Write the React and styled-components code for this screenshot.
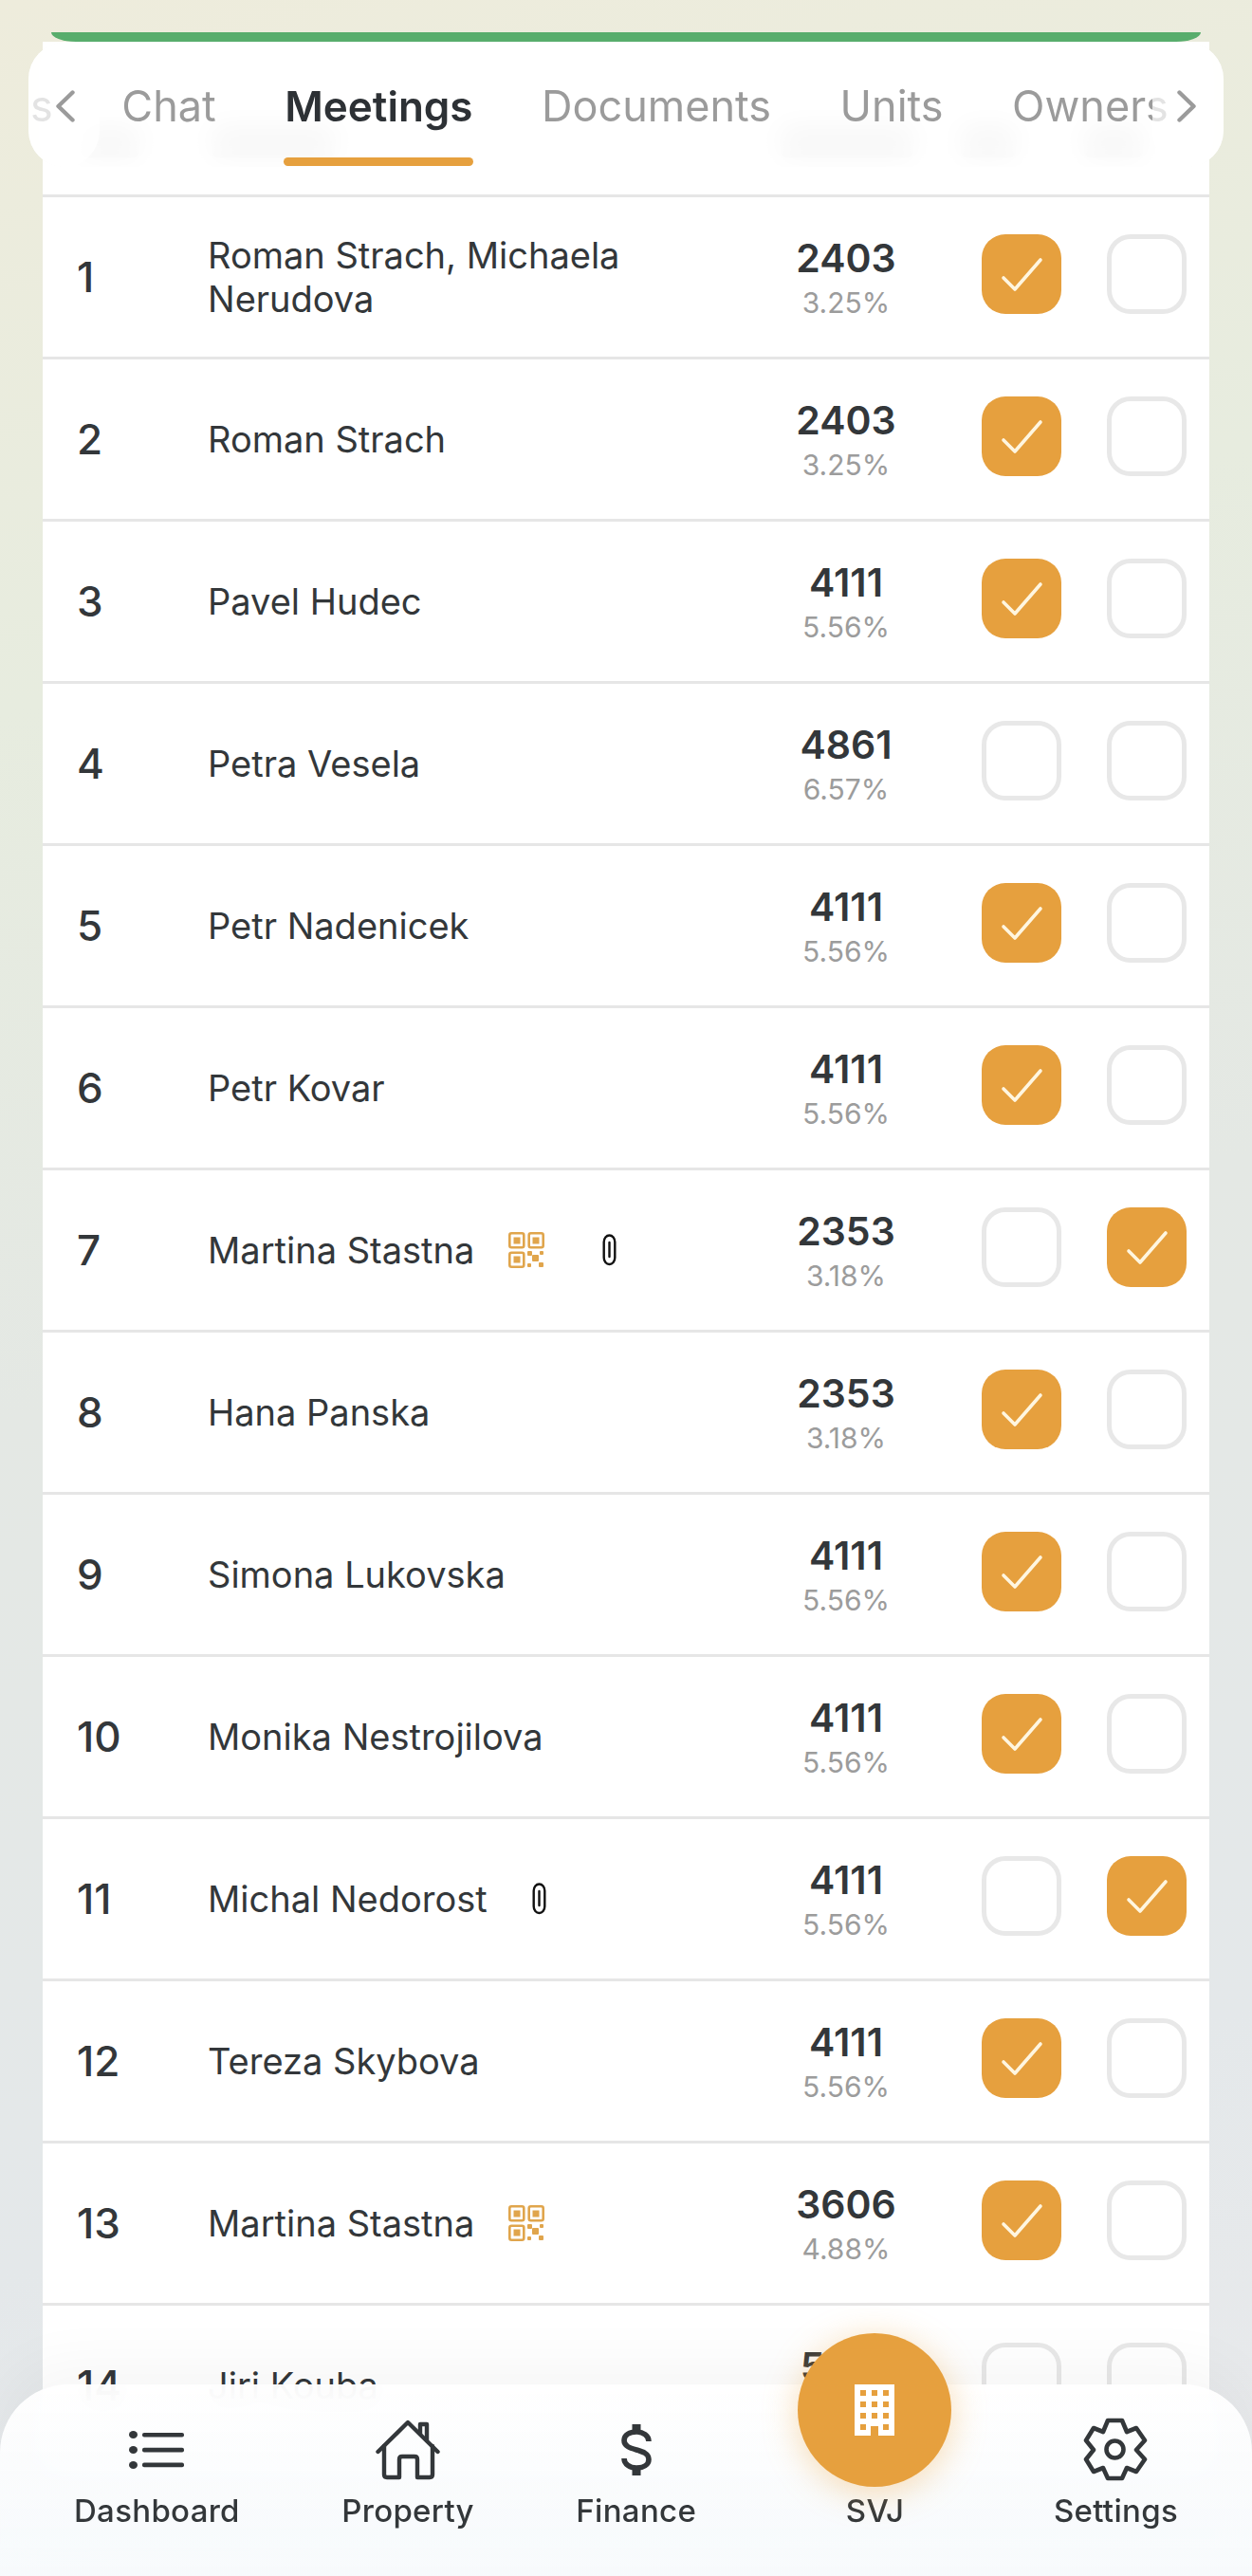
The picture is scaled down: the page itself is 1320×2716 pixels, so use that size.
import React from "react";
import styled, { createGlobalStyle } from "styled-components";

const GlobalStyle = createGlobalStyle`
  html, body {
    margin: 0;
    padding: 0;
  }
  body {
    font-family: Inter, "Noto Sans", "Liberation Sans", sans-serif;
    color: #33373a;
  }
`;

const Page = styled.div`
  position: relative;
  width: 1320px;
  height: 2716px;
  overflow: hidden;
  padding: 34px 45px 0;
  box-sizing: border-box;
  background: linear-gradient(168deg, #eeecdc 0%, #e7ecdf 25%, #e4e8e4 50%, #e4e8ea 80%, #e9eaec 100%);
`;

const GreenBar = styled.div`
  height: 10px;
  margin: 0 9px;
  background: #58ad6c;
  border-radius: 0 0 26px 26px / 0 0 10px 10px;
`;

const Card = styled.div`
  background: #fff;
`;

const HeadRow = styled.div`
  display: flex;
  align-items: flex-start;
  height: 161px;
  padding-top: 88px;
  box-sizing: border-box;
`;

const HeadBlock = styled.div`
  flex: none;
  width: ${(p) => p.$w}px;
  margin-left: ${(p) => p.$ml}px;
  height: 34px;
  background: #cfcfcf;
  border-radius: 6px;
`;

const Row = styled.div`
  display: flex;
  align-items: center;
  height: 171px;
  box-sizing: border-box;
  padding: 3px 24px 0 36px;
  background: linear-gradient(#e6e6e6 3px, transparent 3px);
`;

const Num = styled.div`
  flex: none;
  width: 138px;
  font-size: 44px;
  font-weight: 500;
`;

const NameCell = styled.div`
  flex: 1;
  min-width: 0;
  display: flex;
  align-items: center;
`;

const Name = styled.div`
  max-width: 470px;
  font-size: 38px;
  line-height: 46px;
`;

const Marks = styled.div`
  display: flex;
  align-items: center;
  gap: 49px;
  margin-left: 36px;
`;

const Mark = styled.div`
  display: flex;
  justify-content: center;
  width: 38px;
`;

const Share = styled.div`
  flex: none;
  width: 140px;
  margin-right: 73px;
  text-align: center;
  padding-top: 2px;
`;

const Units = styled.div`
  font-size: 41px;
  line-height: 46px;
  font-weight: 600;
`;

const Percent = styled.div`
  margin-top: 6px;
  font-size: 30px;
  line-height: 36px;
  color: #9c9c9c;
`;

const Box = styled.div`
  flex: none;
  width: 84px;
  height: 84px;
  box-sizing: border-box;
  margin-left: ${(p) => (p.$second ? 48 : 0)}px;
  margin-bottom: 6px;
  border-radius: 25px;
  background: ${(p) => (p.$on ? "#e6a03e" : "#fff")};
  border: ${(p) => (p.$on ? "none" : "5px solid #e8e8e8")};
`;

const CheckSvg = styled.svg`
  display: block;
`;

const TabBar = styled.div`
  position: absolute;
  left: 30px;
  top: 45px;
  width: 1260px;
  height: 131px;
  overflow: hidden;
  border-radius: 38px;
  background: rgba(255, 255, 255, 0.84);
  backdrop-filter: blur(14px);
`;

const TabTrack = styled.div`
  display: flex;
  gap: 72.5px;
  padding: 41px 0 0 2px;
  white-space: nowrap;
`;

const Tab = styled.div`
  position: relative;
  flex: none;
  font-size: ${(p) => (p.$active ? 44 : 45)}px;
  line-height: 52px;
  font-weight: ${(p) => (p.$active ? 600 : 400)};
  color: ${(p) => (p.$active ? "#2d3135" : "#9b9b9b")};
`;

const Underline = styled.div`
  position: absolute;
  left: -1px;
  right: 0;
  top: 80px;
  height: 9px;
  border-radius: 5px;
  background: #e6a03e;
`;

const ArrowZone = styled.div`
  position: absolute;
  top: 0;
  bottom: 0;
  ${(p) => (p.$right ? "right: 0;" : "left: 0;")}
  width: 75px;
  display: flex;
  align-items: center;
  padding-top: 3px;
  box-sizing: border-box;
  justify-content: ${(p) => (p.$right ? "flex-end" : "flex-start")};
  padding-left: ${(p) => (p.$right ? 0 : 29)}px;
  padding-right: ${(p) => (p.$right ? 29 : 0)}px;
  border-radius: 38px;
  background: rgba(255, 255, 255, 0.72);
`;

const Nav = styled.div`
  position: absolute;
  left: 0;
  right: 0;
  bottom: 0;
  height: 202px;
  padding: 26px 78px 0;
  box-sizing: border-box;
  display: flex;
  justify-content: space-between;
  border-radius: 72px 72px 0 0;
  background: linear-gradient(rgba(255, 255, 255, 0.93), rgba(247, 250, 252, 0.97));
  backdrop-filter: blur(16px);
  box-shadow: 0 -24px 60px rgba(0, 0, 0, 0.035);
`;

const NavItem = styled.div`
  display: flex;
  flex-direction: column;
  align-items: center;
  flex: none;
  width: ${(p) => (p.$wide ? "162px" : "auto")};
`;

const IconSlot = styled.div`
  height: 85px;
  display: flex;
  align-items: center;
  justify-content: center;
`;

const NavLabel = styled.div`
  font-size: 33px;
  line-height: 44px;
  font-weight: 500;
  letter-spacing: 0.3px;
  color: #33373a;
`;

const RoundButton = styled.div`
  position: absolute;
  left: 841px;
  top: 2460px;
  width: 162px;
  height: 162px;
  border-radius: 50%;
  display: flex;
  align-items: center;
  justify-content: center;
  background: #e6a03e;
  box-shadow: 0 6px 36px rgba(240, 170, 70, 0.4);
`;

const rows = [
  { n: 1, name: "Roman Strach, Michaela Nerudova", units: 2403, pct: "3.25%", yes: true },
  { n: 2, name: "Roman Strach", units: 2403, pct: "3.25%", yes: true },
  { n: 3, name: "Pavel Hudec", units: 4111, pct: "5.56%", yes: true },
  { n: 4, name: "Petra Vesela", units: 4861, pct: "6.57%" },
  { n: 5, name: "Petr Nadenicek", units: 4111, pct: "5.56%", yes: true },
  { n: 6, name: "Petr Kovar", units: 4111, pct: "5.56%", yes: true },
  { n: 7, name: "Martina Stastna", units: 2353, pct: "3.18%", no: true, qr: true, clip: true },
  { n: 8, name: "Hana Panska", units: 2353, pct: "3.18%", yes: true },
  { n: 9, name: "Simona Lukovska", units: 4111, pct: "5.56%", yes: true },
  { n: 10, name: "Monika Nestrojilova", units: 4111, pct: "5.56%", yes: true },
  { n: 11, name: "Michal Nedorost", units: 4111, pct: "5.56%", no: true, clip: true },
  { n: 12, name: "Tereza Skybova", units: 4111, pct: "5.56%", yes: true },
  { n: 13, name: "Martina Stastna", units: 3606, pct: "4.88%", yes: true, qr: true },
  { n: 14, name: "Jiri Kouba", units: 5106, pct: "6.90%" },
];

const Tick = () => (
  <CheckSvg width="84" height="84" viewBox="0 0 84 84" fill="none">
    <path d="M23 46 L35 58 L62 27" stroke="#fff6e0" strokeWidth="3.6" strokeLinecap="round" strokeLinejoin="round" />
  </CheckSvg>
);

const QrIcon = () => (
  <svg width="38" height="38" viewBox="0 0 38 38" fill="none">
    <g stroke="#e0a54c" strokeWidth="2.6">
      <rect x="1.3" y="1.3" width="15" height="15" rx="2" />
      <rect x="21.7" y="1.3" width="15" height="15" rx="2" />
      <rect x="1.3" y="21.7" width="15" height="15" rx="2" />
    </g>
    <g fill="#e0a54c">
      <rect x="5.5" y="5.5" width="7" height="7" />
      <rect x="25.5" y="5.5" width="7" height="7" />
      <rect x="5.5" y="25.5" width="7" height="7" />
      <rect x="20" y="20" width="5" height="5" rx="1" />
      <rect x="25" y="24" width="7" height="7" rx="1" />
      <rect x="33" y="20" width="4" height="4" rx="1" />
      <rect x="20" y="33" width="4" height="4" rx="1" />
      <rect x="32" y="32" width="5" height="5" rx="1" />
    </g>
  </svg>
);

const ClipIcon = () => (
  <svg width="15" height="34" viewBox="0 0 15 34" fill="none" stroke="#111" strokeWidth="2.4" strokeLinecap="round">
    <path d="M13.3 11 V25 A5.8 7 0 0 1 1.7 25 V8.5 A5.8 7 0 0 1 13.3 8.5 V11" />
    <path d="M7.5 9 V24" />
  </svg>
);

const Chevron = ({ right }) => (
  <svg width="20" height="34" viewBox="0 0 20 34" fill="none">
    <path
      d={right ? "M2.5 2.5 L17.5 17 L2.5 31.5" : "M17.5 2.5 L2.5 17 L17.5 31.5"}
      stroke="#9b9b9b"
      strokeWidth="4.4"
      strokeLinecap="round"
      strokeLinejoin="round"
    />
  </svg>
);

const ListIcon = () => (
  <svg width="58" height="40" viewBox="0 0 58 40" fill="#33373a">
    <ellipse cx="4.5" cy="4" rx="4.5" ry="4" />
    <ellipse cx="4.5" cy="20" rx="4.5" ry="4" />
    <ellipse cx="4.5" cy="36" rx="4.5" ry="4" />
    <rect x="14" y="2" width="44" height="4.6" rx="2" />
    <rect x="14" y="17.8" width="44" height="4.6" rx="2" />
    <rect x="14" y="33.6" width="44" height="4.6" rx="2" />
  </svg>
);

const HomeIcon = () => (
  <svg width="68" height="64" viewBox="0 0 68 64" fill="none" stroke="#33373a" strokeWidth="4.4" strokeLinecap="round" strokeLinejoin="round">
    <path d="M2.5 34 L34 3 L65.5 34" />
    <path d="M9 28 V58 Q9 61 12 61 H25 V42 Q25 39 28 39 H41 Q44 39 44 42 V61 H57 Q60 61 60 58 V28" />
    <path d="M47 15 V5 H54 V22" />
  </svg>
);

const DollarIcon = () => (
  <svg width="32" height="54" viewBox="0 0 32 54" fill="none" stroke="#33373a">
    <path d="M16 0 V9 M16 45 V54" strokeWidth="9" />
    <path
      d="M29 18 C29 12 23 8 16 8 C9 8 3 11 3 17 C3 23 9 25 16 27 C23 29 29 31 29 37 C29 43 23 46 16 46 C9 46 3 42 3 36"
      strokeWidth="5.6"
    />
  </svg>
);

const GearIcon = () => (
  <svg width="68" height="69" viewBox="-3 -3 68 69" fill="none" stroke="#33373a" strokeWidth="4.6" strokeLinejoin="round">
    <path d="M23 1 H38 L43 13 L53 9 L62 22 L53 32 L62 42 L53 55 L43 51 L38 62 H23 L18 51 L8 55 L0 42 L8 32 L0 22 L8 9 L18 13 Z" />
    <circle cx="30.5" cy="31.5" r="9" />
  </svg>
);

const BuildingIcon = () => (
  <svg width="42" height="54" viewBox="0 0 42 54">
    <path
      fill="#fff"
      fillRule="evenodd"
      d="M0 0H42V54H25V44H17V54H0Z
         M6 6V12H12V6Z M18 6V12H24V6Z M30 6V12H36V6Z
         M6 18V24H12V18Z M18 18V24H24V18Z M30 18V24H36V18Z
         M6 30V36H12V30Z M18 30V36H24V30Z M30 30V36H36V30Z
         M6 42V48H12V42Z M30 42V48H36V42Z"
    />
  </svg>
);

const App = () => {
  return (
    <Page>
      <GlobalStyle />
      <GreenBar />
      <Card>
        <HeadRow>
          <HeadBlock $w={62} $ml={40} />
          <HeadBlock $w={130} $ml={76} />
          <HeadBlock $w={140} $ml={470} />
          <HeadBlock $w={58} $ml={50} />
          <HeadBlock $w={62} $ml={72} />
        </HeadRow>
        {rows.map((row) => (
          <Row key={row.n}>
            <Num>{row.n}</Num>
            <NameCell>
              <Name>{row.name}</Name>
              {(row.qr || row.clip) && (
                <Marks>
                  {row.qr && (
                    <Mark>
                      <QrIcon />
                    </Mark>
                  )}
                  {row.clip && (
                    <Mark>
                      <ClipIcon />
                    </Mark>
                  )}
                </Marks>
              )}
            </NameCell>
            <Share>
              <Units>{row.units}</Units>
              <Percent>{row.pct}</Percent>
            </Share>
            <Box $on={row.yes}>{row.yes && <Tick />}</Box>
            <Box $second $on={row.no}>{row.no && <Tick />}</Box>
          </Row>
        ))}
      </Card>

      <TabBar>
        <TabTrack>
          <Tab>s</Tab>
          <Tab>Chat</Tab>
          <Tab $active>
            Meetings
            <Underline />
          </Tab>
          <Tab>Documents</Tab>
          <Tab>Units</Tab>
          <Tab>Owners</Tab>
        </TabTrack>
        <ArrowZone>
          <Chevron />
        </ArrowZone>
        <ArrowZone $right>
          <Chevron right />
        </ArrowZone>
      </TabBar>

      <Nav>
        <NavItem>
          <IconSlot>
            <ListIcon />
          </IconSlot>
          <NavLabel>Dashboard</NavLabel>
        </NavItem>
        <NavItem>
          <IconSlot>
            <HomeIcon />
          </IconSlot>
          <NavLabel>Property</NavLabel>
        </NavItem>
        <NavItem>
          <IconSlot>
            <DollarIcon />
          </IconSlot>
          <NavLabel>Finance</NavLabel>
        </NavItem>
        <NavItem $wide>
          <IconSlot />
          <NavLabel>SVJ</NavLabel>
        </NavItem>
        <NavItem>
          <IconSlot>
            <GearIcon />
          </IconSlot>
          <NavLabel>Settings</NavLabel>
        </NavItem>
      </Nav>
      <RoundButton>
        <BuildingIcon />
      </RoundButton>
    </Page>
  );
};

export default App;
